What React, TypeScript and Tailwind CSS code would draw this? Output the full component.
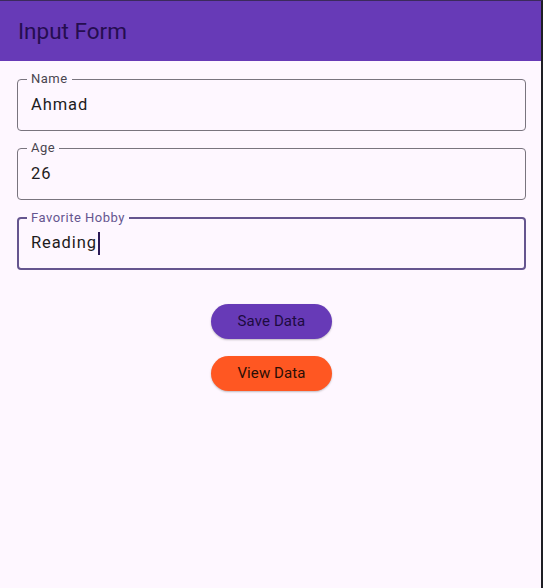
import { useState } from 'react';

const FONT = { fontFamily: 'Roboto, "Noto Sans", sans-serif' };

interface Field {
  id: string;
  label: string;
  value: string;
  focused?: boolean;
}

function OutlinedField({ field }: { field: Field }) {
  const border = field.focused
    ? 'border-2 border-[#65558F] px-[12px] mt-[1px]'
    : 'border border-[#79747E] px-[13px]';
  return (
    <fieldset className={`rounded-[4px] ${border} min-w-0`}>
      <legend
        className={`ml-[-4px] px-[4px] text-[13px] leading-[12px] tracking-[0.5px] ${
          field.focused ? 'text-[#65558F]' : 'text-[#49454F]'
        }`}
      >
        {field.label}
      </legend>
      <div
        className={`flex items-center -mt-[5px] ${
          field.focused ? 'h-[49px]' : 'h-[50px]'
        } text-[16.5px] tracking-[0.9px] text-[#1D1B20]`}
      >
        <span>{field.value}</span>
        {field.focused && <span className="w-[2px] h-[23px] bg-[#2C1A57] ml-[1px]" />}
      </div>
    </fieldset>
  );
}

export default function App() {
  const [fields] = useState<Field[]>([
    { id: 'name', label: 'Name', value: 'Ahmad' },
    { id: 'age', label: 'Age', value: '26' },
    { id: 'hobby', label: 'Favorite Hobby', value: 'Reading', focused: true },
  ]);

  return (
    <div
      className="w-[543px] h-[588px] bg-[#FEF7FF] border-t border-t-[#3B2A5C] border-r-2 border-r-[#1E1E24] flex flex-col"
      style={FONT}
    >
      {/* App bar */}
      <header className="h-[60px] bg-[#673AB7] flex items-center pl-[18px] shrink-0">
        <h1 className="text-[22.5px] text-[#250D4F] font-normal leading-none mt-[1px]">Input Form</h1>
      </header>

      {/* Form */}
      <main className="pl-[17px] pr-[15px] pt-[12px] flex flex-col gap-[11px]">
        {fields.map((f) => (
          <OutlinedField key={f.id} field={f} />
        ))}

        <div className="flex flex-col items-center gap-[17px] mt-[23px]">
          <button className="w-[121px] h-[35px] rounded-full bg-[#673AB7] text-[#1D0B40] text-[15px] tracking-[0.1px] shadow-[0_1px_2px_rgba(0,0,0,0.25)]">
            Save Data
          </button>
          <button className="w-[121px] h-[35px] rounded-full bg-[#FF5722] text-[#2A0E05] text-[15px] tracking-[0.1px] shadow-[0_1px_2px_rgba(0,0,0,0.25)]">
            View Data
          </button>
        </div>
      </main>
    </div>
  );
}
